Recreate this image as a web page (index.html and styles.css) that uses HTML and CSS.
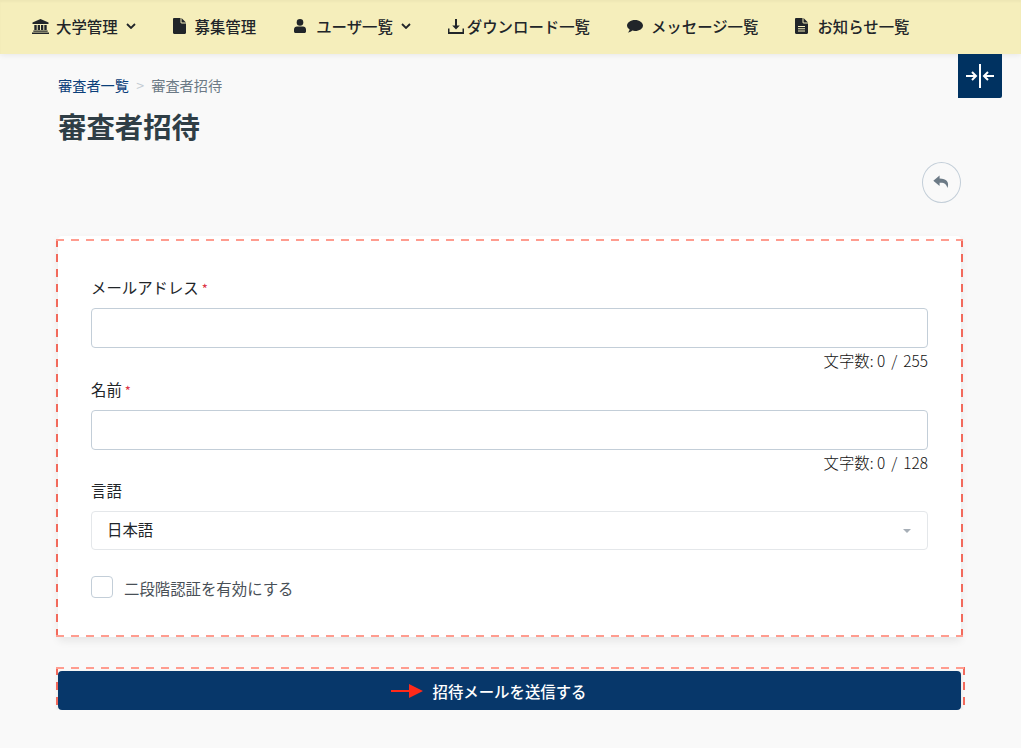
FILE: index.html
```html
<!DOCTYPE html>
<html lang="ja">
<head>
    <meta charset="UTF-8">
    <meta name="viewport" content="width=device-width, initial-scale=1.0">
    <title>審査者招待</title>
    <link rel="stylesheet" href="styles.css">
</head>
<body>
    <nav class="navbar">
        <a class="nav-item">
            <svg class="nav-icon icon-bank" viewBox="0 0 17 15"><path d="M8.500 0 .5 3.400V5h16V3.400zM2.300 6v5h2.400V6zM5.700 6v5h2.300V6zM9 6v5h2.300V6zM12.300 6v5h2.400V6zM1.300 11.500v1.300h14.400v-1.300zM0 13.500V15h17v-1.500z"/></svg>
            大学管理
            <svg class="chevron" viewBox="0 0 10 6"><path d="M1 1l4 4 4-4" /></svg>
        </a>
        <a class="nav-item">
            <svg class="nav-icon icon-file" viewBox="0 0 13 16"><path d="M0 1.200C0 .5.500 0 1.200 0H7.500v4.200c0 .7.500 1.200 1.200 1.200H13v9.400c0 .7-.5 1.200-1.200 1.200H1.200C.5 16 0 15.500 0 14.800zM8.500 0 13 4.400H8.500z"/></svg>
            募集管理
        </a>
        <a class="nav-item">
            <svg class="nav-icon icon-user" viewBox="0 0 12 14"><circle cx="6" cy="3.400" r="3.300"/><path d="M3 7.600h6c1.700 0 3 1.300 3 3v1.900c0 .8-.7 1.500-1.500 1.500h-9C.7 14 0 13.300 0 12.500v-1.900c0-1.700 1.300-3 3-3z"/></svg>
            ユーザ一覧
            <svg class="chevron" viewBox="0 0 10 6"><path d="M1 1l4 4 4-4" /></svg>
        </a>
        <a class="nav-item nav-item-tight">
            <svg class="nav-icon icon-download" viewBox="0 0 16 15"><path d="M7 0h2v6.500h2.800L8 10.400 4.200 6.500H7zM0 9.500h1.500V13h13V9.500H16V15H0z"/></svg>
            ダウンロード一覧
        </a>
        <a class="nav-item">
            <svg class="nav-icon icon-comment" viewBox="0 0 16 13"><path d="M8 0c4.400 0 8 2.500 8 5.500S12.400 11 8 11c-1 0-1.900-.1-2.800-.4C4.300 11.400 2.800 12.500.8 12.500c1-.9 1.600-2 1.800-3.100C1 8.400 0 7 0 5.500 0 2.500 3.600 0 8 0z"/></svg>
            メッセージ一覧
        </a>
        <a class="nav-item">
            <svg class="nav-icon icon-file icon-notice" viewBox="0 0 13 16"><path fill-rule="evenodd" d="M0 1.200C0 .5.500 0 1.200 0H7.500v4.200c0 .7.500 1.200 1.200 1.200H13v9.400c0 .7-.5 1.200-1.200 1.200H1.200C.5 16 0 15.500 0 14.800zM3 8v1h7V8zM3 10.200v1h7v-1zM3 12.400v1h7v-1z"/><path d="M8.500 0 13 4.400H8.500z"/></svg>
            お知らせ一覧
        </a>
    </nav>

    <button class="toggle-btn" type="button">
        <svg viewBox="0 0 30 24"><path d="M15 0v24M1 12h10M7 8l4 4-4 4M29 12H19M23 8l-4 4 4 4"/></svg>
    </button>

    <main class="content">
        <div class="breadcrumb">
            <a class="crumb-link">審査者一覧</a>
            <span class="crumb-sep">&gt;</span>
            <span class="crumb-current">審査者招待</span>
        </div>
        <h1 class="page-title">審査者招待</h1>

        <div class="actions">
            <a class="back-btn">
                <svg viewBox="0 0 16 14"><path d="M6.200.4.300 5.300 6.200 10.300V7.200c3.500 0 6.300.3 7.400 5 2-5.600-.9-9-7.400-9z"/></svg>
            </a>
        </div>

        <form class="card">
            <div class="field">
                <label class="field-label">メールアドレス<span class="required">*</span></label>
                <input class="text-input" type="text">
                <div class="counter">文字数: 0<span class="counter-sep">/</span>255</div>
            </div>
            <div class="field">
                <label class="field-label">名前<span class="required">*</span></label>
                <input class="text-input" type="text">
                <div class="counter">文字数: 0<span class="counter-sep">/</span>128</div>
            </div>
            <div class="field">
                <label class="field-label">言語</label>
                <div class="select-box">日本語<span class="caret"></span></div>
            </div>
            <label class="check-row">
                <span class="checkbox"></span>
                <span class="check-text">二段階認証を有効にする</span>
            </label>
        </form>

        <div class="submit-wrap">
            <button class="submit-btn" type="button">招待メールを送信する</button>
            <svg class="submit-arrow" viewBox="0 0 32 14"><path d="M0 6h18V0l14 7-14 7V8H0z"/></svg>
        </div>
    </main>
</body>
</html>
```

FILE: styles.css
```css
body {
    margin: 0;
    background: #f9f9f9;
    color: #212529;
    font-family: "Noto Sans CJK JP", "Noto Sans", sans-serif;
    font-size: 15.4px;
}

.navbar {
    display: flex;
    align-items: center;
    box-sizing: border-box;
    height: 54px;
    padding: 0 0 2px 32px;
    background: #f5eebb;
    box-shadow: 0 1px 6px rgba(0,0,0,0.08), inset 0 2px 2px rgba(0,0,0,0.03);
}
.nav-item {
    display: flex;
    align-items: center;
    margin-right: 37px;
    font-size: 15.4px;
    font-weight: 500;
    color: #212529;
    white-space: nowrap;
}
.nav-item-tight .nav-icon { margin-right: 3px; }
.nav-icon {
    height: 16px;
    margin-right: 9px;
    fill: #212529;
}
.icon-bank { width: 17px; height: 15px; margin-right: 7px; }
.icon-file { width: 13px; }
.icon-notice { margin-right: 9px; }
.icon-user { width: 12px; height: 14px; margin-left: 1px; margin-right: 10px; }
.icon-download { width: 16px; height: 15px; }
.icon-comment { width: 16px; height: 13px; margin-right: 8px; }
.chevron {
    width: 10px;
    height: 6px;
    margin-left: 8px;
    fill: none;
    stroke: #212529;
    stroke-width: 1.800;
}

.toggle-btn {
    position: absolute;
    top: 54px;
    left: 958px;
    width: 44px;
    height: 44px;
    padding: 0;
    border: none;
    border-radius: 0 0 2px 0;
    background: #003261;
}
.toggle-btn svg {
    display: block;
    width: 30px;
    height: 24px;
    margin: 0 auto;
    fill: none;
    stroke: white;
    stroke-width: 2;
}

.content {
    width: 903px;
    margin-left: 58px;
}
.breadcrumb {
    padding-top: 21px;
    font-size: 14.200px;
    line-height: 20px;
    color: #6c7a86;
}
.crumb-link { color: #0b3f7a; }
.crumb-sep { margin: 0 4px; color: #c4ccd3; }
.page-title {
    margin: 10px 0 0;
    font-size: 28.400px;
    font-weight: 700;
    line-height: 42px;
    color: #2f3e46;
}
.actions {
    display: flex;
    justify-content: flex-end;
    margin-top: 15px;
}
.back-btn {
    display: flex;
    align-items: center;
    justify-content: center;
    box-sizing: border-box;
    width: 39px;
    height: 41px;
    border: 1px solid #c3ced8;
    border-radius: 50%;
}
.back-btn svg { width: 17px; height: 15px; fill: #6c7a86; }

.card {
    position: relative;
    box-sizing: border-box;
    height: 401px;
    margin-top: 33px;
    padding: 40px 33px 0;
    background: white;
    border-radius: 4px;
    box-shadow: 0 4px 8px rgba(0,0,0,0.08);
}
/* dashed guide frames, a bit off the box they mark */
.card::after,
.submit-wrap::after {
    content: "";
    position: absolute;
    pointer-events: none;
    background-image:
        repeating-linear-gradient(90deg, #ff9c8f 0 8px, transparent 8px 15px),
        repeating-linear-gradient(90deg, #ff9c8f 0 8px, transparent 8px 15px),
        repeating-linear-gradient(180deg, #f26a5c 0 8px, transparent 8px 15px),
        repeating-linear-gradient(180deg, #f26a5c 0 8px, transparent 8px 15px);
    background-size: 100% 2px, 100% 2px, 2px 100%, 2px 100%;
    background-position: top, bottom, left, right;
    background-repeat: no-repeat;
}
.card::after { top: 3px; right: -2px; bottom: 0; left: -2px; }
.field { margin-bottom: 5.500px; }
.field-label {
    display: block;
    margin-bottom: 10px;
    line-height: 22px;
}
.required {
    margin-left: 3px;
    font-size: 13px;
    line-height: 0;
    color: #dc3545;
}
.text-input {
    display: block;
    box-sizing: border-box;
    width: 100%;
    height: 40px;
    border: 1px solid #c3ced8;
    border-radius: 4px;
    background: white;
}
.counter {
    line-height: 24px;
    text-align: right;
    font-weight: 300;
    color: #111;
}
.counter-sep { margin: 0 6px; }
.select-box {
    display: flex;
    align-items: center;
    justify-content: space-between;
    box-sizing: border-box;
    height: 39px;
    padding: 0 16px 4px 15px;
    border: 1px solid #e4e7ea;
    border-radius: 4px;
}
.caret {
    width: 0;
    height: 0;
    margin-top: 4px;
    border-left: 4px solid transparent;
    border-right: 4px solid transparent;
    border-top: 4px solid #a7afb7;
}
.check-row {
    display: flex;
    align-items: center;
    margin-top: 25px;
    line-height: 22px;
    color: #495057;
}
.check-text { padding-top: 2px; }
.checkbox {
    box-sizing: border-box;
    width: 22px;
    height: 22px;
    margin-right: 11px;
    border: 1px solid #c3ced8;
    border-radius: 4px;
    background: white;
}

.submit-wrap {
    position: relative;
    margin-top: 34px;
    box-shadow: 0 2px 4px rgba(0,0,0,0.1);
}
.submit-wrap::after { top: -4px; right: -4px; bottom: -1.500px; left: -2px; }
.submit-btn {
    display: block;
    width: 100%;
    height: 39px;
    padding: 0;
    border: none;
    border-radius: 4px;
    background: #07376a;
    color: white;
    font-family: inherit;
    font-size: 15.4px;
    font-weight: 500;
}
.submit-arrow {
    position: absolute;
    top: 13px;
    left: 333px;
    width: 32px;
    height: 14px;
    fill: #ff2a1a;
}
```
